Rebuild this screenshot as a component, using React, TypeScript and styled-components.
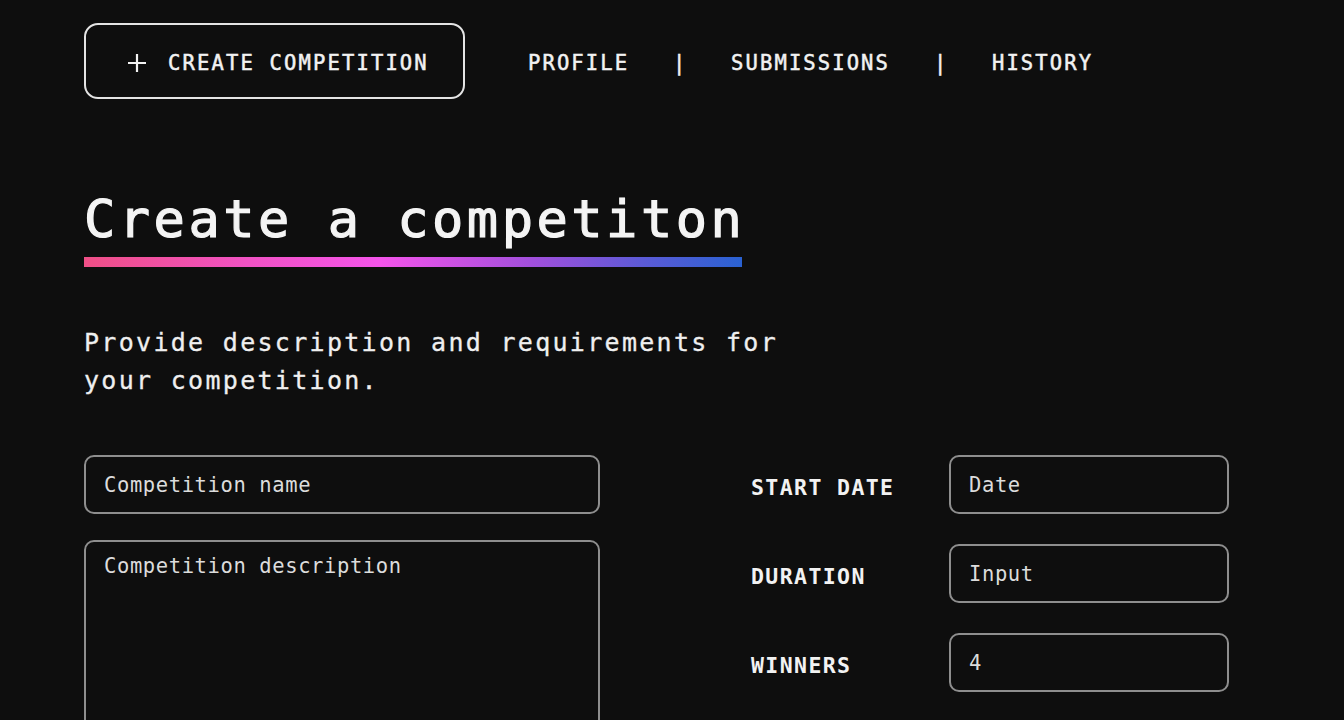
import React from "react";
import styled, { createGlobalStyle } from "styled-components";

const GlobalStyle = createGlobalStyle`
  html, body {
    margin: 0;
    padding: 0;
    background: #0e0e0e;
  }
  body {
    font-family: "DejaVu Sans Mono", "Liberation Mono", monospace;
    color: #f2f2f2;
  }
  * { box-sizing: border-box; }
`;

const Page = styled.div`
  min-height: 720px;
  padding: 23px 84px 0 84px;
  background: #0e0e0e;
  overflow: hidden;
`;

const Header = styled.header`
  display: flex;
  align-items: center;
  gap: 63px;
`;

const CreateButton = styled.button`
  display: flex;
  align-items: center;
  gap: 20px;
  height: 76px;
  width: 381px;
  padding: 3px 0 0 40px;
  background: transparent;
  border: 2px solid #e4e4e4;
  border-radius: 14px;
  color: #f2f2f2;
  font-family: inherit;
  font-size: 20.5px;
  letter-spacing: 2.15px;
  -webkit-text-stroke: 0.5px #f2f2f2;
  cursor: pointer;
`;

const Nav = styled.nav`
  display: flex;
  align-items: center;
  gap: 44px;
  padding-top: 3px;
  font-size: 20.5px;
  letter-spacing: 2.1px;
  color: #f2f2f2;
  -webkit-text-stroke: 0.5px #f2f2f2;
`;

const NavLink = styled.a`
  color: inherit;
  text-decoration: none;
`;

const Separator = styled.span`
  display: inline-block;
  width: 14px;
  text-align: center;
`;

const TitleBlock = styled.div`
  display: inline-flex;
  flex-direction: column;
`;

const Title = styled.h1`
  margin: 90px 0 0 0;
  font-size: 52px;
  line-height: 60px;
  font-weight: normal;
  letter-spacing: 3.5px;
  color: #f4f4f4;
  -webkit-text-stroke: 1.2px #f4f4f4;
`;

const GradientBar = styled.div`
  margin-top: 8px;
  width: 658px;
  height: 10px;
  background: linear-gradient(
    90deg,
    #ef4f86 0%,
    #f152c4 25%,
    #f454ea 45%,
    #a24fdc 68%,
    #5b5ad6 85%,
    #2a62d2 100%
  );
`;

const Lead = styled.p`
  margin: 57px 0 0 0;
  max-width: 740px;
  font-size: 25px;
  line-height: 38px;
  letter-spacing: 2.3px;
  color: #efefef;
  -webkit-text-stroke: 0.3px #efefef;
`;

const Form = styled.form`
  margin-top: 55px;
  display: grid;
  grid-template-columns: 516px auto;
  column-gap: 151px;
  align-items: start;
`;

const LeftColumn = styled.div`
  display: flex;
  flex-direction: column;
  gap: 26px;
`;

const RightColumn = styled.div`
  display: grid;
  grid-template-columns: 198px 280px;
  row-gap: 30px;
  align-items: center;
`;

const fieldStyles = `
  width: 100%;
  background: transparent;
  border: 2px solid #8e8e8e;
  border-radius: 10px;
  color: #dcdcdc;
  font-family: "DejaVu Sans Mono", "Liberation Mono", monospace;
  font-size: 20.5px;
  letter-spacing: 0.6px;
  outline: none;
  &::placeholder {
    color: #dcdcdc;
    opacity: 1;
  }
`;

const TextInput = styled.input`
  ${fieldStyles}
  height: 59px;
  padding: 0 18px;
`;

const TextArea = styled.textarea`
  ${fieldStyles}
  height: 220px;
  padding: 10px 18px;
  resize: none;
  line-height: 28px;
`;

const Label = styled.label`
  padding-top: 6px;
  font-size: 21.5px;
  font-weight: bold;
  letter-spacing: 1.4px;
  color: #f2f2f2;
`;

const PlusIcon = () => (
  <svg width="22" height="22" viewBox="0 0 22 22" fill="none">
    <path d="M11 2v18M2 11h18" stroke="#f2f2f2" strokeWidth="2.2" strokeLinecap="butt" />
  </svg>
);

export default function App() {
  return (
    <>
      <GlobalStyle />
      <Page>
        <Header>
          <CreateButton type="button">
            <PlusIcon />
            <span>CREATE COMPETITION</span>
          </CreateButton>
          <Nav>
            <NavLink href="#">PROFILE</NavLink>
            <Separator>|</Separator>
            <NavLink href="#">SUBMISSIONS</NavLink>
            <Separator>|</Separator>
            <NavLink href="#">HISTORY</NavLink>
          </Nav>
        </Header>

        <TitleBlock>
          <Title>Create a competiton</Title>
          <GradientBar />
        </TitleBlock>

        <Lead>Provide description and requirements for your competition.</Lead>

        <Form onSubmit={(e) => e.preventDefault()}>
          <LeftColumn>
            <TextInput placeholder="Competition name" />
            <TextArea placeholder="Competition description" />
          </LeftColumn>
          <RightColumn>
            <Label htmlFor="start">START DATE</Label>
            <TextInput id="start" placeholder="Date" />
            <Label htmlFor="duration">DURATION</Label>
            <TextInput id="duration" placeholder="Input" />
            <Label htmlFor="winners">WINNERS</Label>
            <TextInput id="winners" placeholder="4" />
          </RightColumn>
        </Form>
      </Page>
    </>
  );
}
